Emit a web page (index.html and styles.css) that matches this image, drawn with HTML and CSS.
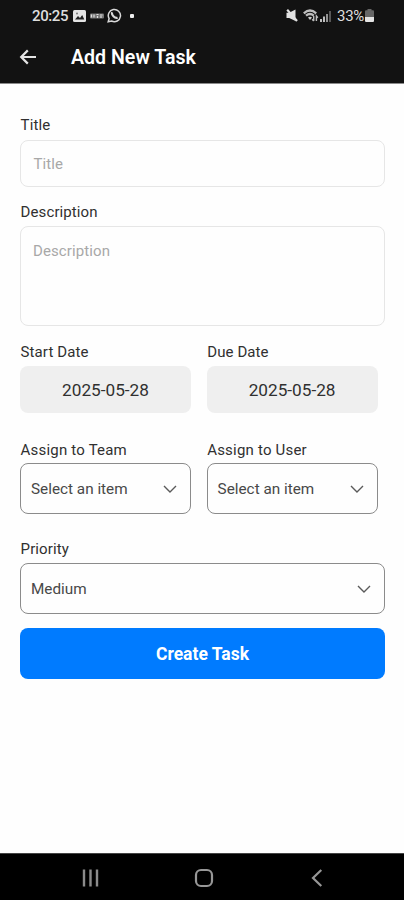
FILE: index.html
```
<!DOCTYPE html>
<html lang="en">
<head>
<meta charset="utf-8">
<meta name="viewport" content="width=device-width, initial-scale=1">
<title>Add New Task</title>
<link rel="stylesheet" href="styles.css">
</head>
<body>
<header class="header">
  <div class="status">
    <div class="status-group">
      <span class="clock">20:25</span>
      <svg class="icon-picture" width="13" height="12" viewBox="0 0 13 12"><rect width="13" height="12" rx="1.5" fill="#e4e4e4"/><path d="M2 9.5 5 6l2 2 2.2-3L11.3 9.5z" fill="#222"/><circle cx="4" cy="3.5" r="1" fill="#777"/></svg>
      <svg class="icon-banner" width="14" height="6" viewBox="0 0 14 6"><rect y=".5" width="14" height="5" rx="1" fill="#777"/><path d="M1.5 1.5v3M4 1.5v3M6.5 1.5h2M7.5 3v2M10 2h2.5M11 3v2" stroke="#ddd" stroke-width="1.2"/></svg>
      <svg class="icon-chat" width="15" height="15" viewBox="0 0 15 15" fill="none" stroke="#d8d8d8"><path d="M1.2 13.8 2.1 10.6A6.1 6.1 0 1 1 4.6 13z" stroke-width="1.5"/><path d="M5.2 4.3C4 6.5 7.8 10.7 10.6 9.7" stroke-width="2.1"/></svg>
      <span class="dot"></span>
    </div>
    <div class="status-group">
      <svg class="icon-mute" width="12" height="13" viewBox="0 0 12 13"><path d="M.5 3.8h2.7L9.5.5v11.500L3.200 9H.5z" fill="#e2e2e2"/><path d="M1.200.8 11 12" stroke="#e2e2e2" stroke-width="2.200"/></svg>
      <svg class="icon-wifi" width="16" height="13" viewBox="0 0 16 13" fill="none" stroke="#bdbdbd"><path d="M.8 4.3Q7 -1.2 13.2 4.3M3 6.7Q7 3.2 10.8 6.7" stroke-width="2.3"/><path d="M5 8.5Q7 6.8 9 8.5L7 11z" fill="#ccc" stroke="none"/><path d="M10.7 7v5M9.2 10.3l1.5 1.7M13.4 12V7l1.4 1.7" stroke-width="1.4"/></svg>
      <svg class="icon-signal" width="11" height="12" viewBox="0 0 11 12"><path d="M1 9v3M4 6.5V12" stroke="#ddd" stroke-width="1.7"/><path d="M7 4v8" stroke="#aaa" stroke-width="1.7"/><path d="M10 1v11" stroke="#666" stroke-width="1.7"/></svg>
      <span class="battery-text">33%</span>
      <svg class="icon-battery" width="9" height="13" viewBox="0 0 9 13"><path d="M2.5 1.2V0h4v1.2H8Q9 1.2 9 2.5V8H0V2.5Q0 1.2 1 1.2z" fill="#666"/><path d="M0 8h9v3.7Q9 13 8 13H1Q0 13 0 11.7z" fill="#e4e4e4"/></svg>
    </div>
  </div>
  <div class="toolbar">
    <svg class="back" width="18" height="16" viewBox="0 0 18 16" fill="none" stroke="#e4e4e4" stroke-width="2.2"><path d="M17 8H2.2M8.8 1.4 2.2 8l6.6 6.6"/></svg>
    <h1 class="title">Add New Task</h1>
  </div>
</header>

<main class="form">
  <div class="field field-title">
    <span class="label">Title</span>
    <div class="input">Title</div>
  </div>
  <div class="field field-description">
    <span class="label">Description</span>
    <div class="input input-area">Description</div>
  </div>
  <div class="row row-dates">
    <div class="field">
      <span class="label">Start Date</span>
      <div class="date">2025-05-28</div>
    </div>
    <div class="field">
      <span class="label">Due Date</span>
      <div class="date">2025-05-28</div>
    </div>
  </div>
  <div class="row row-assign">
    <div class="field">
      <span class="label">Assign to Team</span>
      <div class="select"><span>Select an item</span><svg class="chevron" width="14" height="8" viewBox="0 0 14 8"><path d="M1 1l6 6 6-6"/></svg></div>
    </div>
    <div class="field">
      <span class="label">Assign to User</span>
      <div class="select"><span>Select an item</span><svg class="chevron" width="14" height="8" viewBox="0 0 14 8"><path d="M1 1l6 6 6-6"/></svg></div>
    </div>
  </div>
  <div class="field field-priority">
    <span class="label">Priority</span>
    <div class="select"><span>Medium</span><svg class="chevron" width="14" height="8" viewBox="0 0 14 8"><path d="M1 1l6 6 6-6"/></svg></div>
  </div>
  <button class="submit" type="button">Create Task</button>
</main>

<nav class="navbar">
  <svg width="18" height="18" viewBox="0 0 18 18" stroke="#8b8b8b" stroke-width="2.4"><path d="M2 .5v17M8.5 .5v17M15 .5v17"/></svg>
  <svg class="home" width="20" height="20" viewBox="0 0 20 20" fill="none" stroke="#979797" stroke-width="2.2"><rect x="2" y="2" width="16" height="16" rx="5"/></svg>
  <svg width="12" height="18" viewBox="0 0 12 18" fill="none" stroke="#979797" stroke-width="2.2"><path d="M10.3 1 2 9l8.3 8"/></svg>
</nav>
</body>
</html>
```
FILE: styles.css
```
* {
  box-sizing: border-box;
}

body {
  margin: 0;
  height: 900px;
  display: flex;
  flex-direction: column;
  overflow: hidden;
  background: #fefefe;
  font-family: Roboto, "Liberation Sans", sans-serif;
  color: #303030;
}

.header {
  height: 84px;
  background: #121212;
  border-bottom: 1px solid #8a8a8a;
  color: #fff;
}

.status {
  height: 31px;
  padding: 0 30px 0 32px;
  display: flex;
  justify-content: space-between;
  align-items: center;
  color: #dedede;
  font-size: 15px;
}

.status-group {
  display: flex;
  align-items: center;
}

.clock {
  width: 36px;
  margin-right: 5px;
  letter-spacing: -0.4px;
  font-weight: 500;
}

.icon-banner {
  margin: 0 3px 0 4px;
}

.dot {
  width: 4px;
  height: 4px;
  margin-left: 8px;
  border-radius: 1px;
  background: #eee;
}

.icon-mute {
  margin-right: 5px;
}

.icon-wifi {
  margin-right: 1px;
}

.icon-signal {
  margin-right: 6px;
}

.battery-text {
  width: 28px;
  letter-spacing: -0.3px;
}

.toolbar {
  height: 52px;
  display: flex;
  align-items: center;
  padding-left: 19px;
}

.title {
  margin: 0 0 0 34px;
  padding-top: 2px;
  font-size: 19.6px;
  line-height: 24px;
  font-weight: 600;
}

.form {
  flex: 1;
  display: flex;
  flex-direction: column;
  padding: 32px 19px 0 20px;
}

.field {
  display: flex;
  flex-direction: column;
  gap: 5px;
}

.field-title {
  gap: 6px;
}

.label {
  font-size: 15px;
  line-height: 18px;
  letter-spacing: 0.1px;
  padding-left: 0.6px;
}

.input {
  height: 47px;
  padding: 0 12.5px;
  border: 1px solid #e6e6e6;
  border-radius: 8px;
  font-size: 15px;
  line-height: 46px;
  letter-spacing: 0.1px;
  color: #a8a8a8;
}

.field-description {
  margin-top: 16px;
}

.input-area {
  height: 100px;
  padding: 15px 12px;
  line-height: 18px;
}

.row {
  display: grid;
  grid-template-columns: 171px 171px;
  column-gap: 15.6px;
}

.row-dates {
  margin-top: 17px;
}

.row-assign {
  margin-top: 28px;
}

.row-assign .field {
  gap: 4px;
}

.row-assign .label {
  letter-spacing: 0.2px;
}

.date {
  height: 47px;
  border-radius: 8px;
  background: #efefef;
  font-size: 17.2px;
  line-height: 49px;
  text-align: center;
}

.select {
  height: 51px;
  display: flex;
  align-items: center;
  justify-content: space-between;
  padding: 0 13px 0 10px;
  border: 1px solid #8b8b8b;
  border-radius: 8px;
  font-size: 15.3px;
  color: #484848;
}

.chevron {
  fill: none;
  stroke: #5a5a5a;
  stroke-width: 1.4;
}

.field-priority {
  margin-top: 26px;
}

.submit {
  height: 51px;
  margin-top: 14px;
  padding: 2px 0 0;
  border: 0;
  border-radius: 8px;
  background: #007bff;
  color: #fff;
  font: 700 17.5px/49px Roboto, "Liberation Sans", sans-serif;
}

.navbar {
  height: 47px;
  display: flex;
  align-items: center;
  justify-content: space-between;
  padding: 2px 81px 0 82px;
  background: #000;
  border-top: 1px solid #444;
}

.home {
  margin-right: 4px;
}
```
